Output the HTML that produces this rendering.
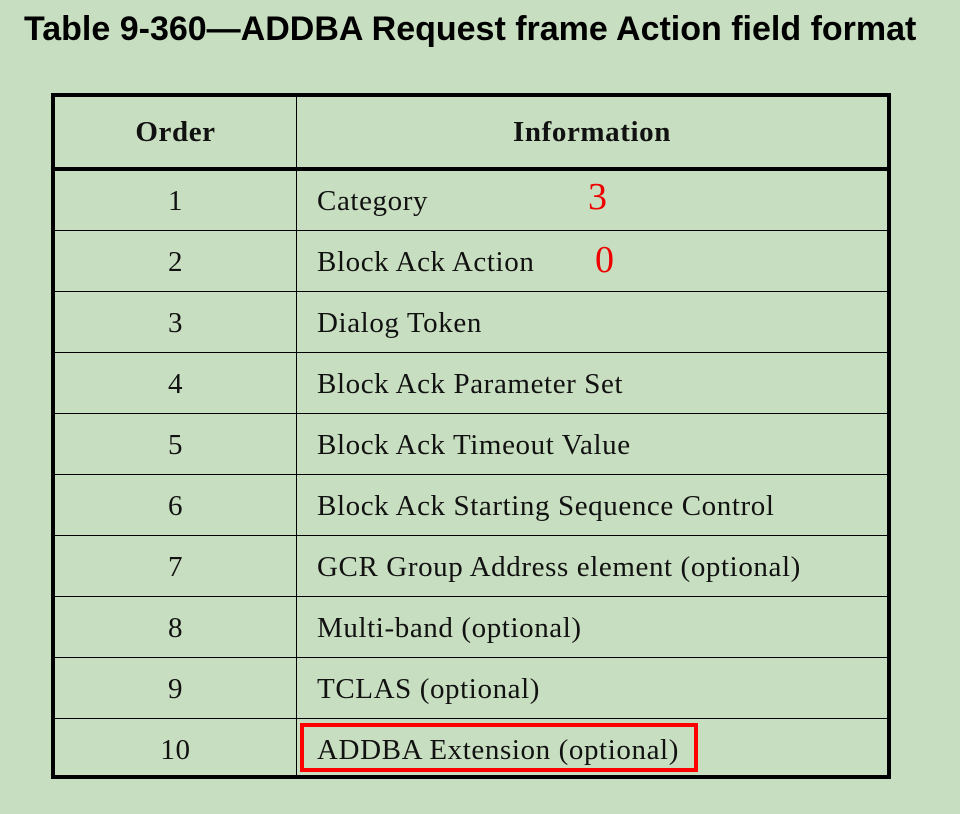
<!DOCTYPE html>
<html><head><meta charset="utf-8"><style>
html,body{margin:0;padding:0}
body{width:960px;height:814px;background:#c8dec0;position:relative;overflow:hidden;font-family:"Liberation Serif",serif;color:#111}
.title{position:absolute;left:24px;top:10px;font:bold 34px "Liberation Sans",sans-serif;white-space:nowrap;color:#000}
.box{position:absolute;left:51px;top:93px;width:832px;height:678px;border:4px solid #000}
.h{position:absolute;left:0;width:832px;background:#000}
.v{position:absolute;left:241px;top:0;width:1px;height:678px;background:#000}
.t{position:absolute;font-size:29px;letter-spacing:0.6px;white-space:nowrap;line-height:32px}
.n{left:0;width:241px;text-align:center}
.i{left:262px}
.red{position:absolute;color:#e00;font-size:38px;line-height:38px}
.rb{position:absolute;left:300px;top:723px;width:390px;height:41px;border:4px solid #f00}
</style></head><body>
<div class="title">Table 9-360—ADDBA Request frame Action field format</div>
<div class="box">
<div class="h" style="top:70px;height:4px"></div>
<div class="h" style="top:133px;height:1px"></div>
<div class="h" style="top:194px;height:1px"></div>
<div class="h" style="top:255px;height:1px"></div>
<div class="h" style="top:316px;height:1px"></div>
<div class="h" style="top:377px;height:1px"></div>
<div class="h" style="top:438px;height:1px"></div>
<div class="h" style="top:499px;height:1px"></div>
<div class="h" style="top:560px;height:1px"></div>
<div class="h" style="top:621px;height:1px"></div>
<div class="v"></div>
<div class="t n" style="top:19px;font-weight:bold">Order</div>
<div class="t" style="top:19px;left:242px;width:590px;text-align:center;font-weight:bold">Information</div>
<div class="t n" style="top:88px">1</div><div class="t i" style="top:88px">Category</div>
<div class="t n" style="top:149px">2</div><div class="t i" style="top:149px">Block Ack Action</div>
<div class="t n" style="top:210px">3</div><div class="t i" style="top:210px">Dialog Token</div>
<div class="t n" style="top:271px">4</div><div class="t i" style="top:271px">Block Ack Parameter Set</div>
<div class="t n" style="top:332px">5</div><div class="t i" style="top:332px">Block Ack Timeout Value</div>
<div class="t n" style="top:393px">6</div><div class="t i" style="top:393px">Block Ack Starting Sequence Control</div>
<div class="t n" style="top:454px">7</div><div class="t i" style="top:454px">GCR Group Address element (optional)</div>
<div class="t n" style="top:515px">8</div><div class="t i" style="top:515px">Multi-band (optional)</div>
<div class="t n" style="top:576px">9</div><div class="t i" style="top:576px">TCLAS (optional)</div>
<div class="t n" style="top:637px">10</div><div class="t i" style="top:637px">ADDBA Extension (optional)</div>
</div>
<div class="red" style="left:588px;top:178px">3</div>
<div class="red" style="left:595px;top:241px">0</div>
<div class="rb"></div>
</body></html>
